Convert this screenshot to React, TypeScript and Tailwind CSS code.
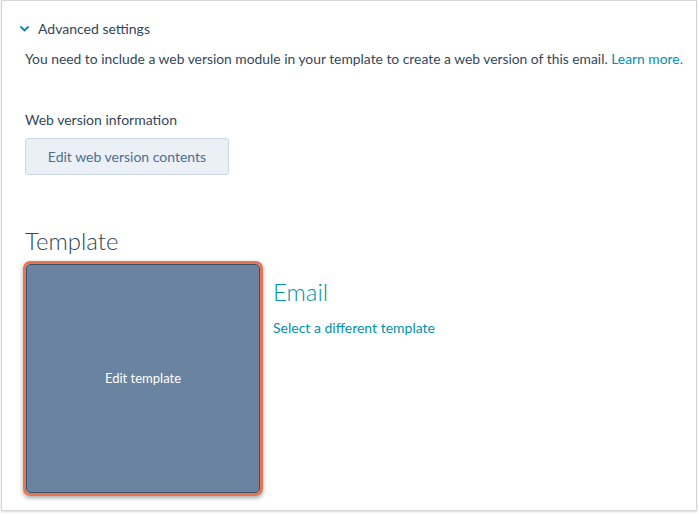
export default function App() {
	return (
		<div className="h-[514px] w-[699px] bg-white font-['Lato',sans-serif] text-[#33475b]">
			<div className="ml-[1px] h-[511px] w-[696px] border border-[#d6d6d6] shadow-[0_1px_2px_rgba(0,0,0,0.15)] px-[23px]">
				<div className="flex items-center gap-[9px] pt-[18px]">
					<svg
						width="9"
						height="6"
						viewBox="0 0 9 6"
						className="-ml-[5px]"
						aria-hidden="true"
					>
						<path
							d="M1 1l3.5 3.5L8 1"
							fill="none"
							stroke="#0091ae"
							strokeWidth="1.8"
							strokeLinecap="round"
							strokeLinejoin="round"
						/>
					</svg>
					<span className="text-[14px] leading-5">Advanced settings</span>
				</div>

				<p className="mt-[10px] text-[13.85px] leading-5 whitespace-nowrap">
					You need to include a web version module in your template to create a
					web version of this email.{" "}
					<a href="#" className="text-[#0091ae]">
						Learn more.
					</a>
				</p>

				<div className="mt-[41px] text-[14px] leading-5">
					Web version information
				</div>
				<button
					type="button"
					className="mt-[8px] h-[37px] w-[204px] rounded-[3px] border border-[#cbd6e2] bg-[#eaf0f6] text-[14px] text-[#506e91]"
				>
					Edit web version contents
				</button>

				<h2 className="mt-[50px] text-[24px] font-light leading-8">Template</h2>

				<div className="mt-[4px] flex gap-[10px]">
					<div className="-ml-[2px] h-[235px] w-[240px] rounded-[7px] border-[3px] border-[#e87552] shadow-[0_2px_4px_rgba(0,0,0,0.35)]">
						<div className="flex h-full w-full items-center justify-center rounded-[4px] border border-[#3d5068] bg-[#6a83a0]">
							<span className="text-[13px] text-white">Edit template</span>
						</div>
					</div>
					<div className="pt-[15px]">
						<div className="text-[24px] font-light leading-8 text-[#0091ae]">
							Email
						</div>
						<a
							href="#"
							className="mt-[10px] block text-[14px] leading-5 text-[#0091ae]"
						>
							Select a different template
						</a>
					</div>
				</div>
			</div>
		</div>
	);
}
